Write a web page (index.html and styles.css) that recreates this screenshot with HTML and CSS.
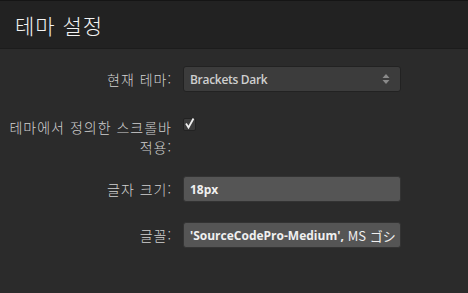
FILE: index.html
```html
<!DOCTYPE html>
<html lang="ko">
<head>
  <meta charset="UTF-8">
  <title>테마 설정</title>
  <link rel="stylesheet" href="styles.css">
</head>
<body>
  <div class="dialog">
    <div class="dialog-header">
      <h1>테마 설정</h1>
    </div>

    <div class="dialog-body">
      <div class="form-row">
        <label class="form-label">현재 테마:</label>
        <div class="select-box">
          <span class="select-value">Brackets Dark</span>
          <span class="select-arrows">
            <svg width="8" height="12" viewBox="0 0 8 12">
              <path d="M4 1 L7.5 5 L0.5 5 Z" fill="#8a8a8a"/>
              <path d="M4 11 L7.5 7 L0.5 7 Z" fill="#8a8a8a"/>
            </svg>
          </span>
        </div>
      </div>

      <div class="form-row form-row-check">
        <label class="form-label">테마에서 정의한 스크롤바<br>적용:</label>
        <div class="check-box">
          <svg width="13" height="13" viewBox="0 0 13 13">
            <path d="M3 6.5 L5.5 10.5 L10.5 1.5" fill="none" stroke="#eee" stroke-width="1.8"/>
          </svg>
        </div>
      </div>

      <div class="form-row">
        <label class="form-label">글자 크기:</label>
        <div class="text-input">18px</div>
      </div>

      <div class="form-row">
        <label class="form-label">글꼴:</label>
        <div class="text-input">'SourceCodePro-Medium', <span class="text-light">MS ゴシ</span></div>
      </div>
    </div>
  </div>
</body>
</html>
```

FILE: styles.css
```css
body {
  margin: 0;
  background-color: #2b2b2b;
  font-family: "Noto Sans CJK KR", "Noto Sans", sans-serif;
  color: #cfcfcf;
}

.dialog {
  width: 468px;
  height: 293px;
  overflow: hidden;
}

.dialog-header {
  height: 47px;
  background-color: #222;
  border-top: 1px solid #151515;
  border-bottom: 1px solid #1c1c1c;
  display: flex;
  align-items: center;
  padding: 0 15px;
}

.dialog-header h1 {
  margin: 0;
  font-size: 21px;
  font-weight: 300;
  color: #f2f2f2;
  letter-spacing: 1px;
}

.dialog-body {
  padding-top: 17px;
}

.form-row {
  display: flex;
  align-items: center;
  margin-bottom: 20px;
}

.form-row-check {
  align-items: flex-start;
  margin-top: 25px;
  margin-bottom: 19px;
}

.form-label {
  width: 183px;
  text-align: right;
  font-size: 14px;
  font-weight: 300;
  line-height: 20px;
  letter-spacing: 1px;
  padding-right: 11px;
  box-sizing: border-box;
  color: #d0d0d0;
  white-space: nowrap;
}

.select-box,
.text-input {
  width: 218px;
  height: 26px;
  box-sizing: border-box;
  border-radius: 3px;
  display: flex;
  align-items: center;
  padding: 0 6px;
  font-family: "Open Sans", "Noto Sans CJK JP", sans-serif;
  font-size: 12px;
  font-weight: 700;
  color: #e6e6e6;
  white-space: nowrap;
  overflow: hidden;
}

.select-box {
  background-color: #3c3c3c;
  border: 1px solid #222;
  justify-content: space-between;
  color: #cfcfcf;
  font-weight: 600;
  letter-spacing: -0.3px;
}

.select-arrows {
  display: flex;
  padding-right: 4px;
}

.text-input {
  background-color: #555;
  border: 1px solid #333;
  color: #f0f0f0;
}

.text-light {
  font-family: "Noto Sans CJK JP", sans-serif;
  font-weight: 400;
  font-size: 13px;
  margin-left: 4px;
}

.check-box {
  width: 13px;
  height: 13px;
  margin-top: 1px;
  background-color: #3c3c3c;
  border: 1px solid #222;
  border-radius: 2px;
  box-sizing: border-box;
  display: flex;
  align-items: center;
  justify-content: center;
  overflow: visible;
}

.check-box svg {
  flex: none;
  margin-top: -2px;
}
```
